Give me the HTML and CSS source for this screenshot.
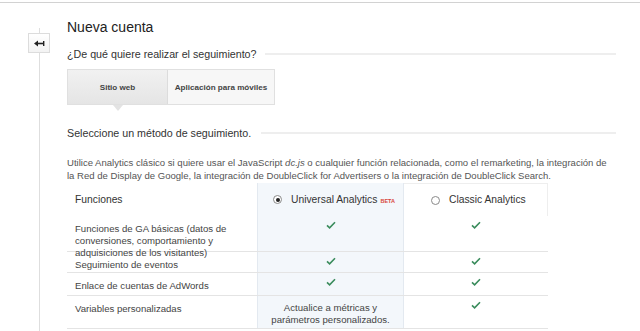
FILE: index.html
```html
<!DOCTYPE html>
<html lang="es">
<head>
	<meta charset="UTF-8">
	<title>Nueva cuenta</title>
	<link rel="stylesheet" href="styles.css">
</head>
<body>
	<div class="topline"></div>
	<div class="page">
		<!-- barra lateral con botón de volver -->
		<div class="rail">
			<div class="back">
				<svg width="11" height="7" viewBox="0 0 11 7">
					<path d="M0 3.5 L4 0.5 L4 6.5 Z" fill="#222"></path>
					<rect x="3" y="2.7" width="6" height="1.6" fill="#222"></rect>
					<rect x="9" y="1" width="1.4" height="5" fill="#222"></rect>
				</svg>
			</div>
		</div>

		<div class="content">
			<h1 class="title">Nueva cuenta</h1>

			<div class="section-head q">
				<span>¿De qué quiere realizar el seguimiento?</span>
				<div class="rule"></div>
			</div>

			<div class="tabs">
				<div class="tab active">Sitio web</div>
				<div class="tab">Aplicación para móviles</div>
			</div>

			<div class="section-head method">
				<span>Seleccione un método de seguimiento.</span>
				<div class="rule"></div>
			</div>

			<p class="note">Utilice Analytics clásico si quiere usar el JavaScript <i>dc.js</i> o cualquier función relacionada, como el remarketing, la integración de la Red de Display de Google, la integración de DoubleClick for Advertisers o la integración de DoubleClick Search.</p>

			<!-- tabla comparativa -->
			<div class="compare">
				<div class="cell head name">Funciones</div>
				<div class="cell head ua">
					<span class="radio checked"></span>
					<span class="label">Universal Analytics</span>
					<span class="beta">BETA</span>
				</div>
				<div class="cell head ca">
					<span class="radio"></span>
					<span class="label">Classic Analytics</span>
				</div>

				<div class="cell name">Funciones de GA básicas (datos de conversiones, comportamiento y adquisiciones de los visitantes)</div>
				<div class="cell ua mark"><svg class="check" viewBox="0 0 10 8"><polyline points="1,4.3 3.6,6.8 9,1.2"></polyline></svg></div>
				<div class="cell ca mark"><svg class="check" viewBox="0 0 10 8"><polyline points="1,4.3 3.6,6.8 9,1.2"></polyline></svg></div>

				<div class="cell name">Seguimiento de eventos</div>
				<div class="cell ua mark"><svg class="check" viewBox="0 0 10 8"><polyline points="1,4.3 3.6,6.8 9,1.2"></polyline></svg></div>
				<div class="cell ca mark"><svg class="check" viewBox="0 0 10 8"><polyline points="1,4.3 3.6,6.8 9,1.2"></polyline></svg></div>

				<div class="cell name">Enlace de cuentas de AdWords</div>
				<div class="cell ua mark"><svg class="check" viewBox="0 0 10 8"><polyline points="1,4.3 3.6,6.8 9,1.2"></polyline></svg></div>
				<div class="cell ca mark"><svg class="check" viewBox="0 0 10 8"><polyline points="1,4.3 3.6,6.8 9,1.2"></polyline></svg></div>

				<div class="cell name">Variables personalizadas</div>
				<div class="cell ua upgrade">Actualice a métricas y parámetros personalizados.</div>
				<div class="cell ca mark"><svg class="check" viewBox="0 0 10 8"><polyline points="1,4.3 3.6,6.8 9,1.2"></polyline></svg></div>
			</div>
		</div>
	</div>
</body>
</html>
```

FILE: styles.css
```css
*{
	box-sizing: border-box;
}
body{
	margin: 0;
	background: #fff;
	color: #444;
	font-family: "Liberation Sans", Arial, sans-serif;
	overflow: hidden;
}
.topline{
	height: 3px;
	border-bottom: 1px solid #d2d2d2;
}
.page{
	display: flex;
	height: 328px;
}
.rail{
	width: 67px;
	flex: none;
	padding: 30px 0 0 28px;
	background: linear-gradient(#dedede, #dedede) no-repeat 39px 25px / 1px 100%;
}
.back{
	width: 22px;
	height: 20px;
	border: 1px solid #dcdcdc;
	background: linear-gradient(#fff, #f3f3f3);
	display: flex;
	align-items: center;
	justify-content: center;
}
.content{
	width: 549px;
}
.title{
	margin: 16px 0 0;
	font-size: 14px;
	line-height: 16px;
	font-weight: normal;
	color: #222;
}
.section-head{
	display: flex;
	align-items: center;
	font-size: 10.7px;
	line-height: 14px;
	color: #333;
}
.section-head.q{
	margin-top: 12px;
}
.section-head.method{
	margin-top: 21px;
}
.section-head.method .rule{
	margin-left: 10px;
}
.rule{
	flex: 1;
	height: 2px;
	margin-left: 8px;
	background: #eee;
}
.tabs{
	display: flex;
	width: 208px;
	height: 36px;
	margin-top: 8px;
	border: 1px solid #e0e0e0;
}
.tab{
	flex: 1;
	display: flex;
	align-items: center;
	justify-content: center;
	font-size: 8.1px;
	font-weight: bold;
	color: #444;
	background: #f7f7f7;
}
.tab.active{
	flex: none;
	width: 100px;
	position: relative;
	border-right: 1px solid #dcdcdc;
	background: linear-gradient(#f1f1f1, #e5e5e5);
}
.tab.active::after{
	content: "";
	position: absolute;
	left: 45px;
	bottom: -7px;
	border-left: 5px solid transparent;
	border-right: 5px solid transparent;
	border-top: 6px solid #e3e3e3;
}
.note{
	margin: 17px 0 0;
	font-size: 9.55px;
	line-height: 12.5px;
	color: #555;
}
.compare{
	display: grid;
	grid-template-columns: 190px 147px 144px;
	grid-template-rows: 33px 36px 21px 23px 33px;
	margin-top: 1px;
	font-size: 9.6px;
	line-height: 12px;
	color: #444;
}
.cell{
	padding: 6px 8px 0;
	border-bottom: 1px solid #e4e4e4;
}
.cell.name{
	padding-top: 7px;
}
.cell.head{
	display: flex;
	align-items: center;
	padding-top: 0;
	border-bottom: none;
	font-size: 10.3px;
	color: #333;
}
.cell.head.ua{
	padding-left: 16px;
}
.cell.head.ca{
	padding-left: 27px;
	border-top: 1px solid #eee;
	border-right: 1px solid #eee;
}
.ua{
	background: #f3f7fb;
	box-shadow: inset 1px 0 #e3e9f0, inset -1px 0 #e3e9f0;
}
.radio{
	flex: none;
	width: 9px;
	height: 9px;
	margin-right: 9px;
	border: 1px solid #8a8a8a;
	border-radius: 50%;
	background: #fff;
	display: flex;
	align-items: center;
	justify-content: center;
}
.radio.checked::after{
	content: "";
	width: 4px;
	height: 4px;
	border-radius: 50%;
	background: #222;
}
.beta{
	margin: 3px 0 0 3px;
	font-size: 5.5px;
	font-weight: bold;
	color: #d9463a;
}
.mark{
	display: flex;
	justify-content: center;
	padding-top: 5px;
}
.check{
	width: 10px;
	height: 8px;
	fill: none;
	stroke: #3a8c5c;
	stroke-width: 1.6;
}
.upgrade{
	text-align: center;
}
```
